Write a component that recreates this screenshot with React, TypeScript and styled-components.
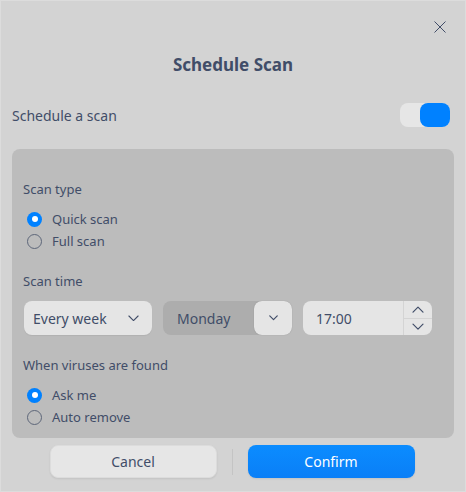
import React, { useState } from 'react'
import styled, { createGlobalStyle } from 'styled-components'

const GlobalStyle = createGlobalStyle`
  html, body {
    margin: 0;
    padding: 0;
    background: #d3d3d3;
  }
  * {
    box-sizing: border-box;
  }
`

const TEXT = '#414d68'

const Dialog = styled.div`
  width: 466px;
  height: 492px;
  background: #d3d3d3;
  border: 1px solid #dcdcdc;
  display: flex;
  flex-direction: column;
  font-family: 'Noto Sans', 'Open Sans', sans-serif;
  color: ${TEXT};
`

const TitleBar = styled.div`
  height: 49px;
  display: flex;
  justify-content: flex-end;
  align-items: flex-start;
  padding: 16px 15px 0 0;
`

const CloseButton = styled.button`
  width: 20px;
  height: 20px;
  padding: 0;
  border: none;
  background: transparent;
  display: flex;
  align-items: center;
  justify-content: center;
  cursor: pointer;
`

const Title = styled.h1`
  margin: 0;
  height: 30px;
  line-height: 30px;
  text-align: center;
  font-size: 17px;
  font-weight: 700;
  color: ${TEXT};
`

const SwitchRow = styled.div`
  margin-top: 23px;
  height: 24px;
  display: flex;
  align-items: center;
  justify-content: space-between;
  padding: 0 15px 0 11px;
  font-size: 14px;
`

const SwitchTrack = styled.button<{ $on: boolean }>`
  width: 50px;
  height: 24px;
  padding: 0;
  border: none;
  border-radius: 8px;
  background: #e6e6e6;
  display: flex;
  justify-content: ${(p) => (p.$on ? 'flex-end' : 'flex-start')};
  cursor: pointer;
`

const SwitchKnob = styled.span`
  width: 30px;
  height: 24px;
  border-radius: 8px;
  background: #0081ff;
`

const Panel = styled.div`
  margin: 22px 11px 0;
  height: 289px;
  background: #bcbcbc;
  border-radius: 8px;
  padding: 30px 11px 10px;
  display: flex;
  flex-direction: column;
`

const SectionLabel = styled.div<{ $gap?: number }>`
  height: 20px;
  line-height: 20px;
  font-size: 13px;
  margin-top: ${(p) => p.$gap ?? 0}px;
`

const RadioGroup = styled.div`
  margin-top: 9px;
  display: flex;
  flex-direction: column;
`

const RadioRow = styled.label`
  height: 22px;
  display: flex;
  align-items: center;
  gap: 10px;
  padding-left: 4px;
  font-size: 13px;
  cursor: pointer;
`

const RadioDot = styled.span<{ $checked: boolean }>`
  width: 15px;
  height: 15px;
  border-radius: 50%;
  flex: 0 0 auto;
  display: flex;
  align-items: center;
  justify-content: center;
  background: ${(p) => (p.$checked ? '#0081ff' : 'transparent')};
  border: ${(p) => (p.$checked ? 'none' : '1px solid #5d6679')};

  &::after {
    content: '';
    display: ${(p) => (p.$checked ? 'block' : 'none')};
    width: 6px;
    height: 6px;
    border-radius: 50%;
    background: #ffffff;
  }
`

const ControlRow = styled.div`
  margin-top: 10px;
  display: flex;
  gap: 11px;
  padding-left: 1px;
`

const Combo = styled.div`
  width: 128px;
  height: 34px;
  border-radius: 8px;
  background: #e5e5e5;
  box-shadow: 0 1px 1px rgba(0, 0, 0, 0.06);
  display: flex;
  align-items: center;
  justify-content: space-between;
  padding: 0 13px 0 9px;
  font-size: 14px;
`

const DisabledCombo = styled.div`
  width: 129px;
  height: 34px;
  border-radius: 8px;
  background: #adadad;
  display: flex;
  align-items: center;
  justify-content: space-between;
  padding-left: 14px;
  font-size: 14px;
`

const ArrowButton = styled.div`
  width: 38px;
  height: 34px;
  border-radius: 8px;
  background: #e5e5e5;
  box-shadow: 0 0 1px rgba(0, 0, 0, 0.25);
  display: flex;
  align-items: center;
  justify-content: center;
`

const TimeEdit = styled.div`
  width: 129px;
  height: 34px;
  border-radius: 8px;
  background: #e5e5e5;
  display: flex;
  align-items: stretch;
  font-size: 14px;
`

const TimeValue = styled.div`
  flex: 1;
  display: flex;
  align-items: center;
  padding-left: 13px;
`

const SpinColumn = styled.div`
  width: 29px;
  border-left: 1px solid #d4d4d4;
  display: flex;
  flex-direction: column;
`

const SpinButton = styled.div<{ $top?: boolean }>`
  flex: 1;
  display: flex;
  align-items: center;
  justify-content: center;
  border-bottom: ${(p) => (p.$top ? '1px solid #d4d4d4' : 'none')};
`

const Footer = styled.div`
  margin-top: 7px;
  display: flex;
  align-items: center;
  justify-content: center;
  gap: 15px;
  padding-right: 2px;
`

const Button = styled.button<{ $primary?: boolean }>`
  width: 167px;
  height: 33px;
  border-radius: 8px;
  font-family: inherit;
  font-size: 14px;
  cursor: pointer;
  border: ${(p) => (p.$primary ? 'none' : '1px solid #dcdcdc')};
  color: ${(p) => (p.$primary ? '#ffffff' : TEXT)};
  background: ${(p) => (p.$primary ? 'linear-gradient(#0b8cff, #0a7ff7)' : '#e6e6e6')};
  box-shadow: 0 1px 2px rgba(0, 0, 0, 0.08);
`

const Divider = styled.span`
  width: 1px;
  height: 26px;
  background: #c4c4c4;
`

const Chevron = ({ up = false, size = 12, weight = 1.2 }: { up?: boolean; size?: number; weight?: number }) => (
  <svg width={size} height={size * 0.6} viewBox="0 0 12 7" fill="none">
    <path
      d={up ? 'M1 6 L6 1 L11 6' : 'M1 1 L6 6 L11 1'}
      stroke={TEXT}
      strokeWidth={weight}
      strokeLinecap="round"
      strokeLinejoin="round"
    />
  </svg>
)

const CloseIcon = () => (
  <svg width="12" height="12" viewBox="0 0 12 12" fill="none">
    <path d="M0.5 0.5 L11.5 11.5 M11.5 0.5 L0.5 11.5" stroke={TEXT} strokeWidth="1" />
  </svg>
)

export default function App() {
  const [enabled, setEnabled] = useState(true)
  const [scanType, setScanType] = useState('quick')
  const [action, setAction] = useState('ask')

  return (
    <>
      <GlobalStyle />
      <Dialog>
        <TitleBar>
          <CloseButton aria-label="Close">
            <CloseIcon />
          </CloseButton>
        </TitleBar>
        <Title>Schedule Scan</Title>
        <SwitchRow>
          <span>Schedule a scan</span>
          <SwitchTrack $on={enabled} onClick={() => setEnabled(!enabled)} aria-pressed={enabled}>
            <SwitchKnob />
          </SwitchTrack>
        </SwitchRow>
        <Panel>
          <SectionLabel>Scan type</SectionLabel>
          <RadioGroup>
            <RadioRow onClick={() => setScanType('quick')}>
              <RadioDot $checked={scanType === 'quick'} />
              Quick scan
            </RadioRow>
            <RadioRow onClick={() => setScanType('full')}>
              <RadioDot $checked={scanType === 'full'} />
              Full scan
            </RadioRow>
          </RadioGroup>
          <SectionLabel $gap={19}>Scan time</SectionLabel>
          <ControlRow>
            <Combo>
              <span>Every week</span>
              <Chevron size={11} />
            </Combo>
            <DisabledCombo>
              <span>Monday</span>
              <ArrowButton>
                <Chevron size={9} weight={1.6} />
              </ArrowButton>
            </DisabledCombo>
            <TimeEdit>
              <TimeValue>17:00</TimeValue>
              <SpinColumn>
                <SpinButton $top>
                  <Chevron up size={12} />
                </SpinButton>
                <SpinButton>
                  <Chevron size={12} />
                </SpinButton>
              </SpinColumn>
            </TimeEdit>
          </ControlRow>
          <SectionLabel $gap={20}>When viruses are found</SectionLabel>
          <RadioGroup>
            <RadioRow onClick={() => setAction('ask')}>
              <RadioDot $checked={action === 'ask'} />
              Ask me
            </RadioRow>
            <RadioRow onClick={() => setAction('remove')}>
              <RadioDot $checked={action === 'remove'} />
              Auto remove
            </RadioRow>
          </RadioGroup>
        </Panel>
        <Footer>
          <Button>Cancel</Button>
          <Divider />
          <Button $primary>Confirm</Button>
        </Footer>
      </Dialog>
    </>
  )
}
